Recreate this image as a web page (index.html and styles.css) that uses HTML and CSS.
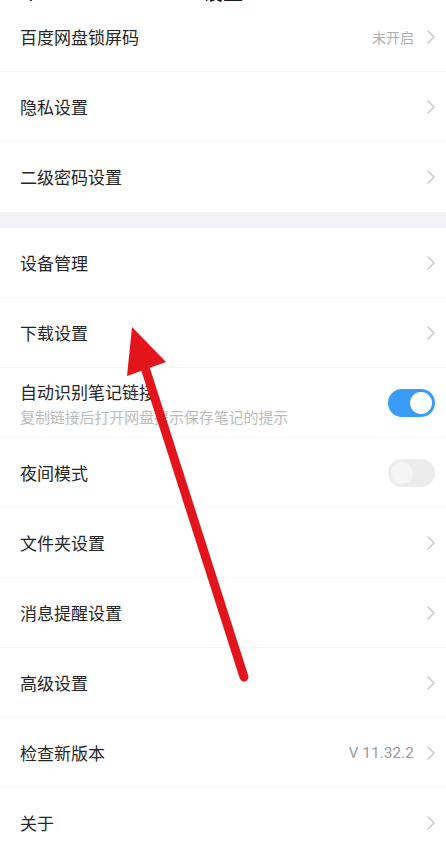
FILE: index.html
```html
<!DOCTYPE html>
<html lang="zh-CN">
<head>
<meta charset="utf-8">
<title>设置</title>
<link rel="stylesheet" href="styles.css">
</head>
<body>
<div class="page">
  <header class="header">
    <svg class="back" width="14" height="20" viewBox="0 0 14 20"><path d="M11 2 L3 10 L11 18" fill="none" stroke="#222" stroke-width="2.2" stroke-linecap="round" stroke-linejoin="round"/></svg>
    <div class="title">设置</div>
  </header>

  <div class="group">
    <div class="row"><span class="label">百度网盘锁屏码</span><span class="right"><span class="value">未开启</span><svg class="chev" width="8" height="14" viewBox="0 0 8 14"><path d="M1 1 L7 7 L1 13" fill="none" stroke="#c9c9c9" stroke-width="1.5" stroke-linecap="round" stroke-linejoin="round"/></svg></span></div>
    <div class="row"><span class="label">隐私设置</span><span class="right"><svg class="chev" width="8" height="14" viewBox="0 0 8 14"><path d="M1 1 L7 7 L1 13" fill="none" stroke="#c9c9c9" stroke-width="1.5" stroke-linecap="round" stroke-linejoin="round"/></svg></span></div>
    <div class="row last"><span class="label">二级密码设置</span><span class="right"><svg class="chev" width="8" height="14" viewBox="0 0 8 14"><path d="M1 1 L7 7 L1 13" fill="none" stroke="#c9c9c9" stroke-width="1.5" stroke-linecap="round" stroke-linejoin="round"/></svg></span></div>
  </div>

  <div class="gap"></div>

  <div class="group">
    <div class="row"><span class="label">设备管理</span><span class="right"><svg class="chev" width="8" height="14" viewBox="0 0 8 14"><path d="M1 1 L7 7 L1 13" fill="none" stroke="#c9c9c9" stroke-width="1.5" stroke-linecap="round" stroke-linejoin="round"/></svg></span></div>
    <div class="row"><span class="label">下载设置</span><span class="right"><svg class="chev" width="8" height="14" viewBox="0 0 8 14"><path d="M1 1 L7 7 L1 13" fill="none" stroke="#c9c9c9" stroke-width="1.5" stroke-linecap="round" stroke-linejoin="round"/></svg></span></div>
    <div class="row"><span class="texts"><span class="label">自动识别笔记链接</span><span class="sub">复制链接后打开网盘提示保存笔记的提示</span></span><span class="toggle on"><span class="knob"></span></span></div>
    <div class="row"><span class="label">夜间模式</span><span class="toggle off"><span class="knob"></span></span></div>
    <div class="row"><span class="label">文件夹设置</span><span class="right"><svg class="chev" width="8" height="14" viewBox="0 0 8 14"><path d="M1 1 L7 7 L1 13" fill="none" stroke="#c9c9c9" stroke-width="1.5" stroke-linecap="round" stroke-linejoin="round"/></svg></span></div>
    <div class="row"><span class="label">消息提醒设置</span><span class="right"><svg class="chev" width="8" height="14" viewBox="0 0 8 14"><path d="M1 1 L7 7 L1 13" fill="none" stroke="#c9c9c9" stroke-width="1.5" stroke-linecap="round" stroke-linejoin="round"/></svg></span></div>
    <div class="row"><span class="label">高级设置</span><span class="right"><svg class="chev" width="8" height="14" viewBox="0 0 8 14"><path d="M1 1 L7 7 L1 13" fill="none" stroke="#c9c9c9" stroke-width="1.5" stroke-linecap="round" stroke-linejoin="round"/></svg></span></div>
    <div class="row"><span class="label">检查新版本</span><span class="right"><span class="value version">V 11.32.2</span><svg class="chev" width="8" height="14" viewBox="0 0 8 14"><path d="M1 1 L7 7 L1 13" fill="none" stroke="#c9c9c9" stroke-width="1.5" stroke-linecap="round" stroke-linejoin="round"/></svg></span></div>
    <div class="row"><span class="label">关于</span><span class="right"><svg class="chev" width="8" height="14" viewBox="0 0 8 14"><path d="M1 1 L7 7 L1 13" fill="none" stroke="#c9c9c9" stroke-width="1.5" stroke-linecap="round" stroke-linejoin="round"/></svg></span></div>
  </div>

  <svg class="annot" width="446" height="842" viewBox="0 0 446 842">
    <line x1="244" y1="677" x2="142" y2="358" stroke="#e2151d" stroke-width="9" stroke-linecap="round"/>
    <polygon points="132,327 127,376 166,362" fill="#e2151d"/>
  </svg>
</div>
</body>
</html>
```
FILE: styles.css
```css
html, body {
  margin: 0;
  padding: 0;
  background: #ffffff;
}
body {
  font-family: "Noto Sans CJK SC", "Noto Sans", Roboto, sans-serif;
  color: #222222;
  overflow: hidden;
}
.page {
  position: relative;
  width: 446px;
  height: 842px;
  overflow: hidden;
}
.header {
  height: 20px;
  margin-top: -18px;
  display: flex;
  align-items: center;
  justify-content: center;
  position: relative;
}
.back {
  position: absolute;
  left: 20px;
  top: 0;
}
.title {
  font-size: 20px;
  font-weight: 700;
  line-height: 20px;
  color: #1a1a1a;
}
.group {
  display: flex;
  flex-direction: column;
}
.row {
  height: 70px;
  box-sizing: border-box;
  border-bottom: 1px solid #f6f6f6;
  display: flex;
  align-items: center;
  justify-content: space-between;
  padding: 0 11px 0 20px;
}
.row.last {
  border-bottom: none;
}
.label {
  font-size: 17px;
  line-height: 22px;
  color: #262626;
}
.texts {
  display: flex;
  flex-direction: column;
  gap: 4px;
  padding-top: 2px;
}
.sub {
  font-size: 15px;
  line-height: 20px;
  color: #bcbcbc;
  letter-spacing: -0.1px;
}
.right {
  display: flex;
  align-items: center;
  gap: 13px;
}
.value {
  font-size: 14px;
  color: #b0b0b0;
}
.version {
  font-family: Roboto, "Noto Sans", sans-serif;
  font-size: 15px;
  color: #9a9a9a;
  letter-spacing: 0.2px;
}
.chev {
  display: block;
}
.gap {
  height: 16px;
  background: #f3f3f7;
}
.toggle {
  width: 47px;
  height: 28px;
  border-radius: 14px;
  box-sizing: border-box;
  padding: 3px;
  display: flex;
}
.toggle.on {
  background: #3a9cf6;
  justify-content: flex-end;
}
.toggle.off {
  background: #ececec;
  justify-content: flex-start;
}
.knob {
  width: 22px;
  height: 22px;
  border-radius: 50%;
  background: #ffffff;
}
.toggle.off .knob {
  background: #f5f5f5;
}
.annot {
  position: absolute;
  left: 0;
  top: 0;
  pointer-events: none;
}
```
